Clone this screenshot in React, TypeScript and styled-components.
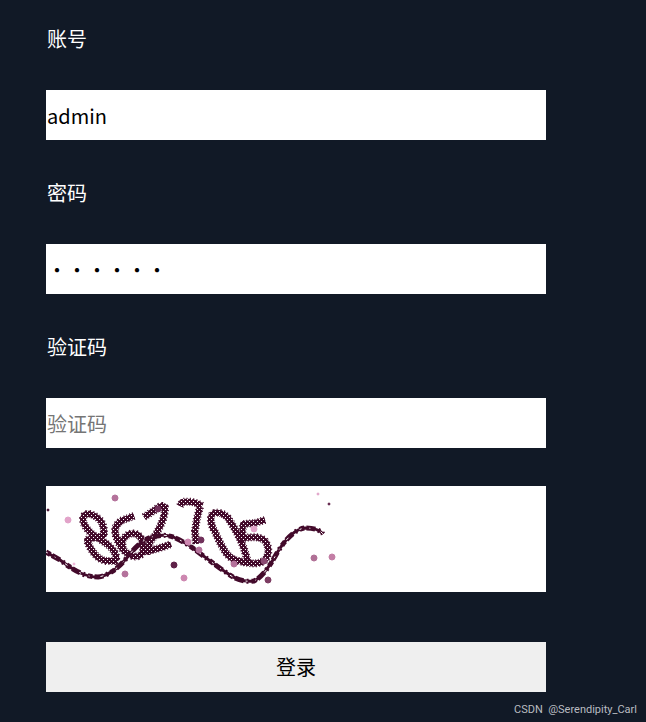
import React, { useState } from "react";
import styled, { createGlobalStyle } from "styled-components";

const GlobalStyle = createGlobalStyle`
  * { box-sizing: border-box; }
  body {
    margin: 0;
    background: #111926;
    font-family: "Noto Sans CJK SC", sans-serif;
    font-size: 20px;
    line-height: 28px;
  }
`;

const Page = styled.main`
  display: flex;
  flex-direction: column;
  min-height: 100vh;
  padding: 25px 9px 3px 46px;
`;

const LoginForm = styled.form`
  display: flex;
  flex-direction: column;
  width: 100%;
  max-width: 500px;
`;

const Field = styled.div`
  display: flex;
  flex-direction: column;
  gap: 37px;
  margin-bottom: 39px;
`;

const Label = styled.label`
  padding-left: 1px;
  color: #fff;
`;

const TextInput = styled.input`
  width: 100%;
  height: 50px;
  padding: 0 1px;
  border: 0;
  border-radius: 0;
  outline: 0;
  background: #fff;
  color: #000;
  font: inherit;

  &::placeholder {
    color: #757575;
    opacity: 1;
  }
`;

const CaptchaButton = styled.button`
  display: block;
  width: 100%;
  height: 106px;
  margin-top: -1px;
  padding: 0;
  border: 0;
  background: #fff;
  cursor: pointer;
`;

const CaptchaDrawing = styled.svg`
  display: block;
  width: 500px;
  max-width: 100%;
  height: 106px;
`;

const SubmitButton = styled.button`
  height: 50px;
  margin-top: 50px;
  padding: 0;
  border: 0;
  background: #efefef;
  color: #000;
  font: inherit;
  cursor: pointer;
`;

const Credit = styled.footer`
  margin-top: auto;
  align-self: flex-end;
  color: #b9bcc1;
  font-family: Roboto, sans-serif;
  font-size: 11px;
  line-height: 18px;
  white-space: pre;
`;

const INK = "#430a2b";

const digits = [
  "M46 48C39 42 35 34 38 30C41 26 47 28 53 33C58 38 58 44 58 49C54 52 47 51 41 54C44 64 52 75 62 75L69 75C73 70 66 62 61 58L46 48",
  "M88 30L77 34C69 38 68 44 70 50C73 60 78 66 84 69C90 72 95 70 97 66C98 58 96 50 90 48C84 46 78 50 76 56L77 62",
  "M98 31L109 24C114 19 119 19 119 22C119 34 112 44 109 50C104 55 102 58 103 65L117 61L125 58",
  "M134 20L136 16C144 15 150 16 156 20M154 21L151 32L149 45L150 58",
  "M202 76C192 76 186 74 181 68C176 62 172 52 169 46C163 36 164 27 169 27C174 26 178 28 182 32C190 44 196 56 199 66Z",
  "M219 34L209 37L197 38L196 52C206 51 214 50 219 55C224 62 223 70 218 75C210 79 204 77 196 76",
];

const wave =
  "M0 66L14 74C30 86 40 91 52 91C66 89 76 78 84 68C92 58 100 51 111 50C124 47 134 54 144 60C158 70 170 80 181 87C190 94 198 96 208 95C218 90 226 76 231 67C240 52 250 43 259 42C268 42 274 44 277 48";

const dots: [number, number, number, string][] = [
  [69, 12, 3, "#b4729b"], [22, 34, 3, "#e2a3c9"], [79, 88, 3, "#b4729b"],
  [128, 79, 3, "#5f2148"], [138, 92, 3, "#cd87b0"], [142, 56, 3, "#cd87b0"],
  [155, 54, 3, "#70305a"], [153, 64, 3, "#b4729b"], [112, 23, 3, "#70305a"],
  [188, 78, 3, "#b4729b"], [208, 43, 3, "#e2a3c9"], [218, 75, 3, "#8a4a72"],
  [222, 94, 3, "#7c3c62"], [268, 72, 3, "#b07096"], [286, 71, 3, "#c37ea5"],
  [272, 8, 1, "#e2a3c9"], [283, 18, 1, "#5f2148"], [2, 24, 1, "#430a2b"],
  [28, 78, 1, "#efb5d8"],
];

function Captcha() {
  return (
    <CaptchaDrawing viewBox="0 0 500 106" preserveAspectRatio="xMinYMid meet" aria-hidden="true">
      <defs>
        <pattern id="weave" width="4" height="4" patternUnits="userSpaceOnUse">
          <path d="M0 0H4V4H0Z" fill={INK} />
          <path d="M1 1h1v1h-1zM3 3h1v1h-1z" fill="#fff" />
        </pattern>
      </defs>
      <g fill="none" strokeLinejoin="round">
        {digits.map((d) => (
          <g key={d}>
            <path d={d} stroke={INK} strokeWidth="8" strokeDasharray="1 2" />
            <path d={d} stroke="url(#weave)" strokeWidth="6" />
          </g>
        ))}
        <path d={wave} stroke={INK} strokeWidth="3" />
        <path d={wave} stroke={INK} strokeWidth="5" strokeDasharray="5 2 9 3 2 3" />
        <path d={wave} stroke="#fff" strokeWidth="1" strokeDasharray="2 8 1 11 3 14" />
      </g>
      {dots.map(([cx, cy, r, fill]) => (
        <circle key={`${cx}-${cy}`} cx={cx} cy={cy} r={r} fill={fill} stroke={fill} strokeWidth="1" />
      ))}
    </CaptchaDrawing>
  );
}

export default function App() {
  const [account, setAccount] = useState("admin");
  const [password, setPassword] = useState("123456");
  const [code, setCode] = useState("");

  return (
    <>
      <GlobalStyle />
      <Page>
        <LoginForm onSubmit={(e) => e.preventDefault()}>
          <Field>
            <Label htmlFor="account">账号</Label>
            <TextInput id="account" value={account} onChange={(e) => setAccount(e.target.value)} />
          </Field>
          <Field>
            <Label htmlFor="password">密码</Label>
            <TextInput id="password" type="password" value={password} onChange={(e) => setPassword(e.target.value)} />
          </Field>
          <Field>
            <Label htmlFor="code">验证码</Label>
            <TextInput id="code" placeholder="验证码" value={code} onChange={(e) => setCode(e.target.value)} />
          </Field>
          <CaptchaButton type="button" aria-label="862705">
            <Captcha />
          </CaptchaButton>
          <SubmitButton type="submit">登录</SubmitButton>
        </LoginForm>
        <Credit>CSDN  @Serendipity_Carl</Credit>
      </Page>
    </>
  );
}
